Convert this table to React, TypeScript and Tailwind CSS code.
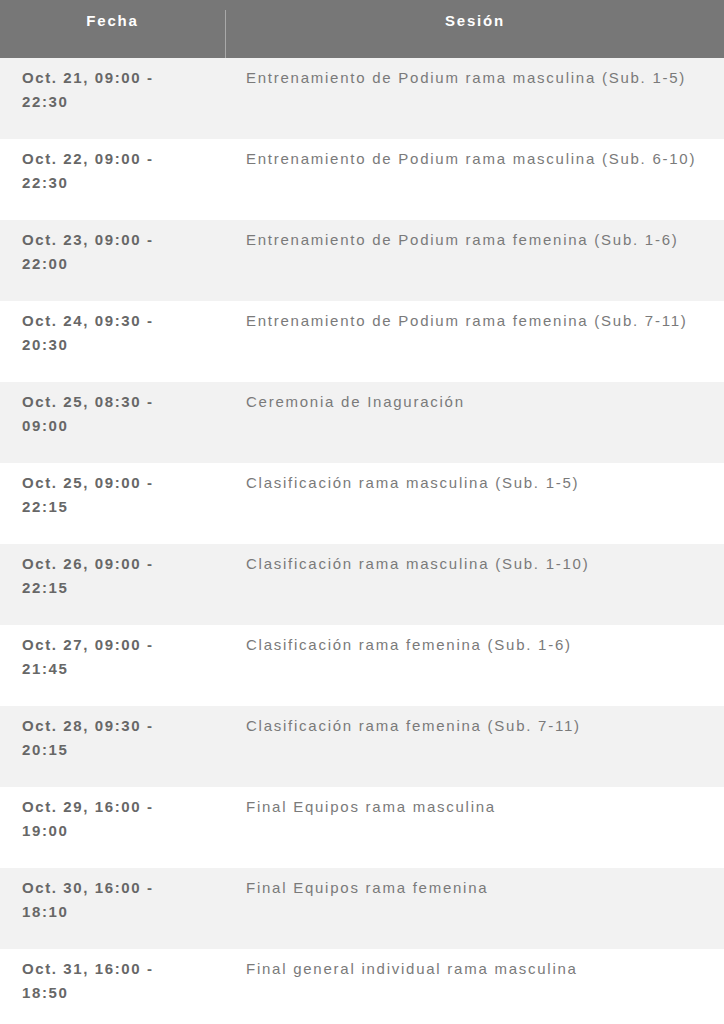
import React from 'react'

interface Session {
    fecha: string
    hora: string
    sesion: string
}

const sessions: Session[] = [
    { fecha: 'Oct. 21, 09:00 -', hora: '22:30', sesion: 'Entrenamiento de Podium rama masculina (Sub. 1-5)' },
    { fecha: 'Oct. 22, 09:00 -', hora: '22:30', sesion: 'Entrenamiento de Podium rama masculina (Sub. 6-10)' },
    { fecha: 'Oct. 23, 09:00 -', hora: '22:00', sesion: 'Entrenamiento de Podium rama femenina (Sub. 1-6)' },
    { fecha: 'Oct. 24, 09:30 -', hora: '20:30', sesion: 'Entrenamiento de Podium rama femenina (Sub. 7-11)' },
    { fecha: 'Oct. 25, 08:30 -', hora: '09:00', sesion: 'Ceremonia de Inaguración' },
    { fecha: 'Oct. 25, 09:00 -', hora: '22:15', sesion: 'Clasificación rama masculina (Sub. 1-5)' },
    { fecha: 'Oct. 26, 09:00 -', hora: '22:15', sesion: 'Clasificación rama masculina (Sub. 1-10)' },
    { fecha: 'Oct. 27, 09:00 -', hora: '21:45', sesion: 'Clasificación rama femenina (Sub. 1-6)' },
    { fecha: 'Oct. 28, 09:30 -', hora: '20:15', sesion: 'Clasificación rama femenina (Sub. 7-11)' },
    { fecha: 'Oct. 29, 16:00 -', hora: '19:00', sesion: 'Final Equipos rama masculina' },
    { fecha: 'Oct. 30, 16:00 -', hora: '18:10', sesion: 'Final Equipos rama femenina' },
    { fecha: 'Oct. 31, 16:00 -', hora: '18:50', sesion: 'Final general individual rama masculina' },
]

export default function App() {
    return (
        <div className="w-[724px] bg-white font-['Liberation_Sans',Arial,sans-serif]">
            {/* cabecera */}
            <div className="flex h-[58px] bg-[#777777] text-white font-bold text-[15px] leading-[20px] tracking-[1.8px]">
                <div className="w-[226px] border-r border-[#a9a9a9] mt-[10px] flex justify-center pt-[1px]">
                    Fecha
                </div>
                <div className="flex-1 flex justify-center pt-[11px]">Sesión</div>
            </div>

            {sessions.map((s, i) => (
                <div
                    key={i}
                    className={`flex h-[81px] ${i % 2 === 0 ? 'bg-[#f2f2f2]' : 'bg-white'}`}
                >
                    <div className="w-[226px] pl-[22px] pt-[8px] text-[15px] leading-[24px] font-bold text-[#676767] tracking-[1.6px]">
                        <div>{s.fecha}</div>
                        <div>{s.hora}</div>
                    </div>
                    <div className="flex-1 pl-[20px] pt-[8px] text-[15px] leading-[24px] text-[#7a7a7a] tracking-[1.75px] whitespace-nowrap">
                        {s.sesion}
                    </div>
                </div>
            ))}
        </div>
    )
}
